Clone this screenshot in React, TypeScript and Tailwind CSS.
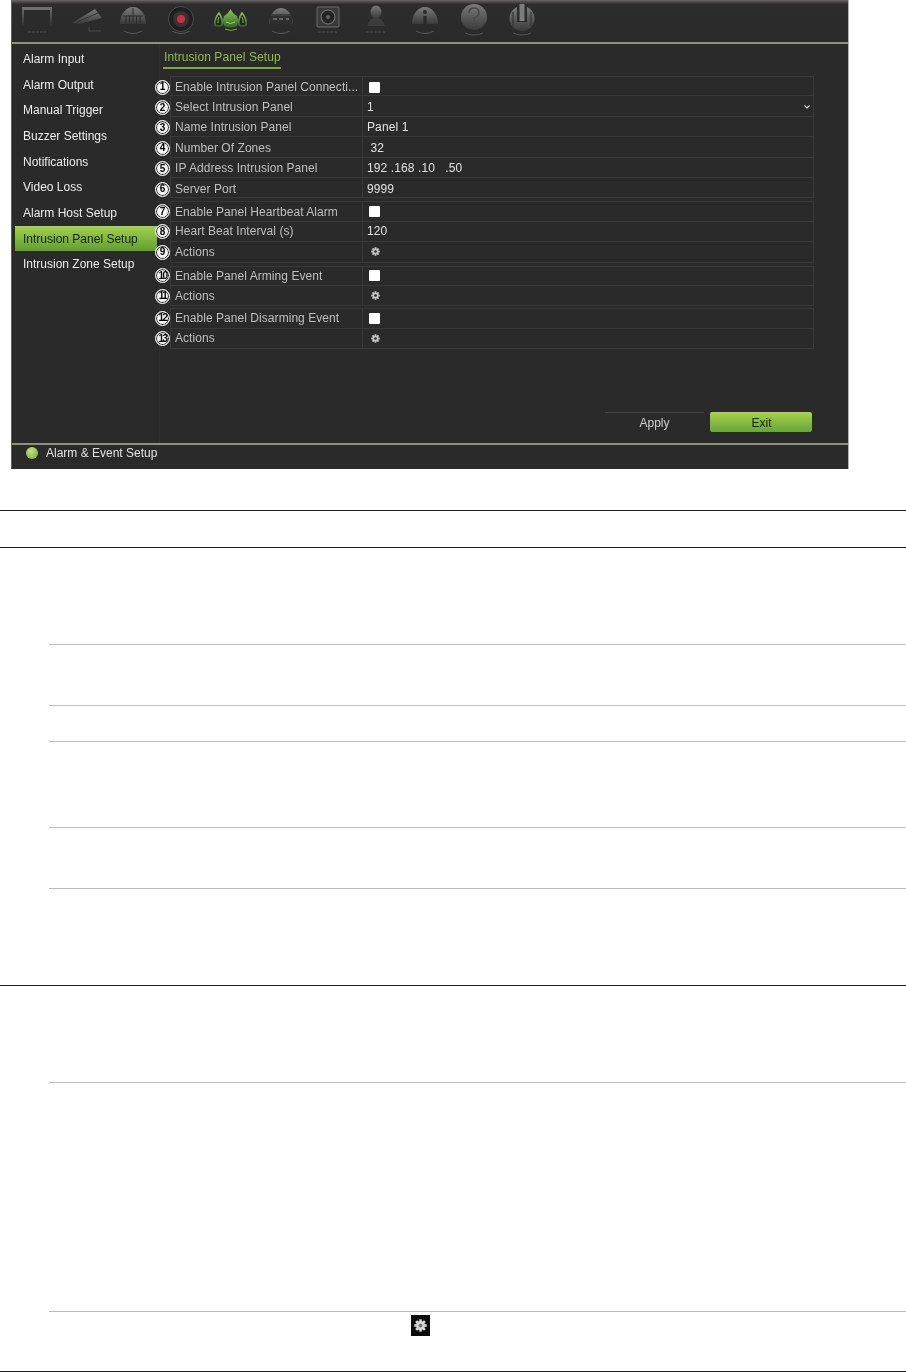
const sideItems = [
  "Alarm Input",
  "Alarm Output",
  "Manual Trigger",
  "Buzzer Settings",
  "Notifications",
  "Video Loss",
  "Alarm Host Setup",
  "Intrusion Panel Setup",
  "Intrusion Zone Setup",
];

type Row = { n: number; label: string; value?: string; kind?: "check" | "gear" | "select" };

const groups: { rows: Row[]; gap: string }[] = [
  {
    gap: "mb-[3px]",
    rows: [
      { n: 1, label: "Enable Intrusion Panel Connecti...", kind: "check" },
      { n: 2, label: "Select Intrusion Panel", value: "1", kind: "select" },
      { n: 3, label: "Name Intrusion Panel", value: "Panel 1" },
      { n: 4, label: "Number Of Zones", value: " 32" },
      { n: 5, label: "IP Address Intrusion Panel", value: "192 .168 .10   .50" },
      { n: 6, label: "Server Port", value: "9999" },
    ],
  },
  {
    gap: "mb-[3px]",
    rows: [
      { n: 7, label: "Enable Panel Heartbeat Alarm", kind: "check" },
      { n: 8, label: "Heart Beat Interval (s)", value: "120" },
      { n: 9, label: "Actions", kind: "gear" },
    ],
  },
  {
    gap: "mb-[2px]",
    rows: [
      { n: 10, label: "Enable Panel Arming Event", kind: "check" },
      { n: 11, label: "Actions", kind: "gear" },
    ],
  },
  {
    gap: "",
    rows: [
      { n: 12, label: "Enable Panel Disarming Event", kind: "check" },
      { n: 13, label: "Actions", kind: "gear" },
    ],
  },
];

// rules of the table under the screenshot, top to bottom
const tableRows = [
  { h: "h-[37px]", inset: false },
  { h: "h-[97px]", inset: false },
  { h: "h-[61px]", inset: true },
  { h: "h-[36px]", inset: true },
  { h: "h-[86px]", inset: true },
  { h: "h-[61px]", inset: true },
  { h: "h-[97px]", inset: true },
  { h: "h-[97px]", inset: false },
  { h: "h-[229px]", inset: true },
];

function Gear({ size = 10, hole = "#2a2a2a", color = "#c4c4c4" }: { size?: number; hole?: string; color?: string }) {
  const teeth = [0, 45, 90, 135, 180, 225, 270, 315];
  return (
    <svg width={size} height={size} viewBox="0 0 20 20">
      {teeth.map((a) => (
        <rect key={a} x="8" y="0.5" width="4" height="5" fill={color} transform={`rotate(${a} 10 10)`} />
      ))}
      <circle cx="10" cy="10" r="6.8" fill={color} />
      <circle cx="10" cy="10" r="3" fill={hole} />
    </svg>
  );
}

function Defs() {
  return (
    <svg width="0" height="0" className="absolute">
      <defs>
        <linearGradient id="metal" x1="0" y1="0" x2="0" y2="1">
          <stop offset="0" stopColor="#7a7a7a" />
          <stop offset="1" stopColor="#3a3a3a" />
        </linearGradient>
        <linearGradient id="side" x1="0" y1="0" x2="0" y2="1">
          <stop offset="0" stopColor="#6a6a6a" />
          <stop offset="1" stopColor="#2e2e2e" />
        </linearGradient>
        <linearGradient id="leaf" x1="0" y1="0" x2="0" y2="1">
          <stop offset="0" stopColor="#8fc454" />
          <stop offset="1" stopColor="#2f6a2a" />
        </linearGradient>
      </defs>
    </svg>
  );
}

const arc = <path d="M9 31 Q18 36 27 31" stroke="#565656" strokeWidth="1" fill="none" />;
const foot = <path d="M8 32 H28" stroke="#4e4e4e" strokeWidth="1.2" strokeDasharray="3 1" fill="none" />;

const toolIcons = [
  // monitor
  <svg key="1" width="36" height="40" viewBox="0 0 36 40">
    <rect x="3" y="7" width="30" height="3" fill="#6e6e6e" />
    <rect x="3" y="9" width="2" height="17" fill="url(#side)" />
    <rect x="31" y="9" width="2" height="17" fill="url(#side)" />
    <path d="M9 32 H27" stroke="#4e4e4e" strokeWidth="1.2" strokeDasharray="3 1" />
  </svg>,
  // camera
  <svg key="2" width="36" height="40" viewBox="0 0 36 40">
    <path d="M3 23 L26 9 L33 18 L10 24 Z" fill="url(#metal)" />
    <path d="M8 22 L29 13" stroke="#2a2a2a" strokeWidth="0.8" />
    <path d="M20 27 V31 H32" stroke="#4e4e4e" strokeWidth="1" fill="none" />
  </svg>,
  // dome with tiles
  <svg key="3" width="36" height="40" viewBox="0 0 36 40">
    <path d="M5 24 A13 17 0 0 1 31 24 Z" fill="url(#metal)" />
    <path d="M8 16 H28 M18 8 V24 M11 16 V24 M14.5 16 V24 M21.5 16 V24 M25 16 V24" stroke="#2a2a2a" strokeWidth="1" />
    {arc}
  </svg>,
  // record
  <svg key="4" width="36" height="40" viewBox="0 0 36 40">
    <circle cx="18" cy="19" r="12.5" fill="#1f1f1f" stroke="#4a4a4a" strokeWidth="1" />
    <circle cx="18" cy="19" r="8" fill="#343434" />
    <circle cx="18" cy="19" r="4" fill="#d92a3c" />
    {arc}
  </svg>,
  // alarm bells: filled centre flame, outlined side lobes
  <svg key="5" width="36" height="40" viewBox="0 0 36 40">
    <path d="M17.5 9 Q20 14 24 16 Q26 21 24 26 Q17.5 29 11 26 Q9 21 11 16 Q15 14 17.5 9 Z" fill="url(#leaf)" />
    <path d="M13 22 Q17.5 25 22 22" stroke="#a8d870" strokeWidth="0.8" fill="none" />
    <path d="M6 13 Q1 19 2 25 Q5 27 9 25 Q10 19 6 13 Z" fill="#262626" stroke="url(#leaf)" strokeWidth="1.6" />
    <path d="M6 17 Q4.5 20 5 23" stroke="#8fc454" strokeWidth="0.9" fill="none" />
    <path d="M29 13 Q34 19 33 25 Q30 27 26 25 Q25 19 29 13 Z" fill="#262626" stroke="url(#leaf)" strokeWidth="1.6" />
    <path d="M29 17 Q30.5 20 30 23" stroke="#8fc454" strokeWidth="0.9" fill="none" />
    <path d="M12 29 Q18 32 24 29" stroke="#79a944" strokeWidth="1" fill="none" />
  </svg>,
  // network dome
  <svg key="6" width="36" height="40" viewBox="0 0 36 40">
    <path d="M6 24 A12 16 0 0 1 30 24 Z" fill="url(#metal)" />
    <path d="M6 15 H30" stroke="#2a2a2a" strokeWidth="1.2" />
    <rect x="7" y="16" width="22" height="8" fill="#2f2f2f" />
    <path d="M10 19 H14 M16 19 H20 M23 19 H26" stroke="#9a9a9a" strokeWidth="1.2" />
    {arc}
  </svg>,
  // hard disk
  <svg key="7" width="36" height="40" viewBox="0 0 36 40">
    <rect x="7" y="7" width="22" height="20" rx="1" fill="#3a3a3a" stroke="#6a6a6a" strokeWidth="1" />
    <circle cx="18" cy="17" r="7" fill="#242424" stroke="#707070" strokeWidth="1.2" />
    <circle cx="18" cy="17" r="2" fill="#666" />
    {foot}
  </svg>,
  // user
  <svg key="8" width="36" height="40" viewBox="0 0 36 40">
    <ellipse cx="18" cy="12" rx="5.5" ry="6.5" fill="url(#metal)" />
    <path d="M9 26 Q11 20 15 18 L21 18 Q25 20 27 26 Z" fill="#3c3c3c" />
    {foot}
  </svg>,
  // info
  <svg key="9" width="36" height="40" viewBox="0 0 36 40">
    <path d="M5 24 A13 17 0 0 1 31 24 Z" fill="url(#metal)" />
    <circle cx="18" cy="12" r="2" fill="#2a2a2a" />
    <path d="M18 16 V24" stroke="#2a2a2a" strokeWidth="3.2" />
    {arc}
  </svg>,
  // help
  <svg key="10" width="36" height="40" viewBox="0 0 36 40">
    <circle cx="18" cy="17" r="13" fill="url(#metal)" />
    <path d="M13 13 Q13 8 18 8 Q23 8 23 13 Q23 16 18 18 V22" stroke="#4a4a4a" strokeWidth="1.6" fill="none" />
    <circle cx="18" cy="25" r="1.3" fill="#4a4a4a" />
    <path d="M9 33 Q18 37 27 33" stroke="#565656" strokeWidth="1" fill="none" />
  </svg>,
  // power
  <svg key="11" width="36" height="40" viewBox="0 0 36 40">
    <path d="M13 7 A12.5 12.5 0 1 0 23 7 L23 22 H13 Z" fill="url(#metal)" />
    <path d="M9 12 V26 M27 12 V26" stroke="#2c2c2c" strokeWidth="1" />
    <rect x="15.5" y="4" width="5" height="17" fill="#7c7c7c" />
    <path d="M9 33 Q18 37 27 33" stroke="#565656" strokeWidth="1" fill="none" />
  </svg>,
];

const iconWidths = [50, 46, 48, 50, 50, 47, 48, 49, 49, 48, 36];

function Badge({ n }: { n: number }) {
  return (
    <div
      className={`flex h-[15px] w-[15px] shrink-0 items-center justify-center rounded-full border border-[#f2f2f2] bg-[#f4f4f4] text-[10px] font-bold leading-none text-black shadow-[inset_0_0_0_1px_#222] ${n < 7 ? "mt-[2px]" : ""}`}
    >
      <span className={n > 9 ? "tracking-[-1.5px]" : ""}>{n}</span>
    </div>
  );
}

function FormRow({ row, first }: { row: Row; first: boolean }) {
  const nudge = row.n < 7 ? "pt-[2px]" : "";
  return (
    <div className="flex h-[20.4px] items-center">
      <Badge n={row.n} />
      <div
        className={`flex h-full flex-1 items-center border-x border-b border-[#383838] ${first ? "border-t" : ""}`}
      >
        <div
          className={`flex h-full w-[192px] items-center border-r border-[#383838] pl-[4px] tracking-[0.05px] text-[#bfbfbf] ${nudge}`}
        >
          {row.label}
        </div>
        <div
          className={`flex h-full flex-1 items-center justify-between pl-[4px] pr-[3px] whitespace-pre tracking-[0.1px] text-[#e2e2e2] ${nudge}`}
        >
          {row.kind === "check" && <div className="ml-[2px] h-[11px] w-[11px] rounded-[1px] bg-white" />}
          {row.kind === "gear" && (
            <div className="ml-[4px]">
              <Gear size={9} />
            </div>
          )}
          {row.value && <span>{row.value}</span>}
          {row.kind === "select" && (
            <svg width="6" height="4" viewBox="0 0 6 4">
              <path d="M0.5 0.5 L3 3 L5.5 0.5" stroke="#ddd" strokeWidth="1.2" fill="none" />
            </svg>
          )}
        </div>
      </div>
    </div>
  );
}

export default function App() {
  return (
    <div className="min-h-[1372px] w-[906px] overflow-hidden bg-white font-['Liberation_Sans',Arial,sans-serif] text-[12px]">
      <Defs />
      <div className="ml-[11px] flex h-[469px] w-[838px] flex-col border-l border-r border-l-[#5c5c5c] border-r-[#b5b5b5] bg-[#2a2a2a] blur-[0.3px]">
        <header className="flex h-[42px] shrink-0 items-start bg-gradient-to-b from-[#6a6666] from-0% via-[#2d2c2c] via-10% to-[#2a2a2a] pl-[7px] blur-[0.3px]">
          {toolIcons.map((icon, i) => (
            <div key={i} className="flex h-[40px] shrink-0 justify-start" style={{ width: iconWidths[i] }}>
              {icon}
            </div>
          ))}
        </header>
        <div className="h-[2px] shrink-0 bg-[#8f917a]" />

        <main className="flex min-h-0 flex-1">
          <aside className="w-[148px] shrink-0 border-r border-[#303030] pl-[3px] pt-[2px]">
            {sideItems.map((item) => {
              const active = item === "Intrusion Panel Setup";
              return (
                <div key={item} className="flex h-[25.7px] items-center">
                  <div
                    className={
                      active
                        ? "flex h-[24.5px] w-[142px] shrink-0 items-center bg-gradient-to-b from-[#a4d24e] to-[#5f9f2e] pl-[8px] text-[#14200a]"
                        : "pl-[8px] text-[#ececec]"
                    }
                  >
                    {item}
                  </div>
                </div>
              );
            })}
          </aside>

          <section className="flex min-w-0 flex-1 flex-col pl-[3px]">
            <div className="mt-[6px] w-[118px] border-b-2 border-[#7fa83c] pb-[2px] pl-[1px] leading-[15px] tracking-[0.1px] whitespace-nowrap text-[#8fbe45]">
              Intrusion Panel Setup
            </div>
            <div className="-ml-[8px] mt-[7px] w-[659px]">
              {groups.map((g) => (
                <div key={g.rows[0].n} className={g.gap}>
                  {g.rows.map((row, i) => (
                    <FormRow key={row.n} row={row} first={i === 0} />
                  ))}
                </div>
              ))}
            </div>
            <div className="mb-[11px] mr-[36px] mt-auto flex justify-end gap-[6px]">
              <div className="flex h-[20px] w-[99px] items-center justify-center border-t border-[#454545] text-[#d0d0d0]">
                Apply
              </div>
              <div className="flex h-[20px] w-[102px] items-center justify-center rounded-[2px] bg-gradient-to-b from-[#a8d24a] to-[#66a63a] pl-[1px] pt-[1px] text-[#14200a]">
                Exit
              </div>
            </div>
          </section>
        </main>

        <div className="h-[2px] shrink-0 bg-[#8f917a]" />
        <footer className="flex h-[24px] shrink-0 items-start pl-[14px] pt-[1px] text-[#e2e2e2]">
          <div className="mr-[8px] mt-[1px] h-[12px] w-[12px] rounded-full bg-[radial-gradient(circle_at_40%_35%,#c4e27c,#6fae35)]" />
          <span className="leading-[15px]">Alarm &amp; Event Setup</span>
        </footer>
      </div>

      <div className="mt-[41px]">
        {tableRows.map((row, i) => (
          <div key={i} className={row.h}>
            <div className={row.inset ? "ml-[49px] h-px bg-[#bdbdbd]" : "h-px bg-[#1f1f1f]"} />
          </div>
        ))}
        <div className="ml-[49px] h-px bg-[#bdbdbd]" />
        <div className="h-[59px] pt-[3px]">
          <div className="ml-[411px] flex h-[21px] w-[19px] items-center justify-center bg-[#0c0c0c]">
            <Gear size={13} hole="#777" color="#d8d8d8" />
          </div>
        </div>
        <div className="h-px bg-[#1f1f1f]" />
      </div>
    </div>
  );
}
